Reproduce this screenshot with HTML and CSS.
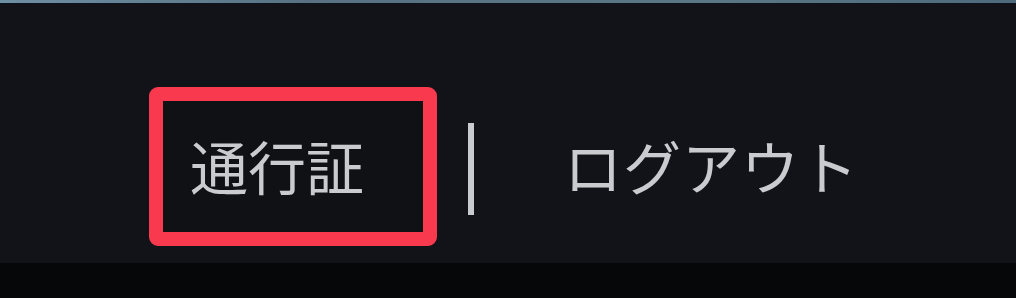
FILE: index.html
```html
<!DOCTYPE html>
<html lang="ja">

<head>
    <meta charset="UTF-8">
    <meta name="viewport" content="width=device-width, initial-scale=1.0">
    <title>メニュー</title>
    <link rel="stylesheet" href="styles.css">
</head>

<body>
    <div class="top-strip"></div>
    <div class="panel">
        <nav class="nav">
            <a class="nav-item highlight" href="#">通行証</a>
            <span class="divider"></span>
            <a class="nav-item logout" href="#">ログアウト</a>
        </nav>
    </div>
    <div class="bottom"></div>
</body>

</html>
```

FILE: styles.css
```css
* {
    margin: 0;
    padding: 0;
    box-sizing: border-box;
}

body {
    width: 1016px;
    height: 298px;
    overflow: hidden;
    background-color: #060709;
    font-family: 'Noto Sans CJK JP', 'Noto Sans', sans-serif;
}

.top-strip {
    height: 4px;
    background: linear-gradient(to right, #6f8fa3, #587283 30%, #5b7684 70%, #4e6a7c);
    border-bottom: 1px solid #0b141c;
}

.panel {
    height: 259px;
    background-color: #111318;
    padding-top: 83px;
    padding-left: 149px;
}

.nav {
    display: flex;
    align-items: center;
}

.nav-item {
    color: #c9cbce;
    text-decoration: none;
    font-size: 58px;
    line-height: 1;
}

.highlight {
    display: flex;
    align-items: center;
    width: 288px;
    height: 159px;
    padding-left: 27px;
    padding-bottom: 4px;
    border: 14px solid #f93a4e;
    border-radius: 9px;
    background-color: #0f1115;
}

.divider {
    width: 6px;
    height: 92px;
    margin-left: 31px;
    margin-right: 90px;
    margin-top: 5px;
    background-color: #c8ccd0;
}

.logout {
    letter-spacing: 1px;
    margin-top: -4px;
}
```
